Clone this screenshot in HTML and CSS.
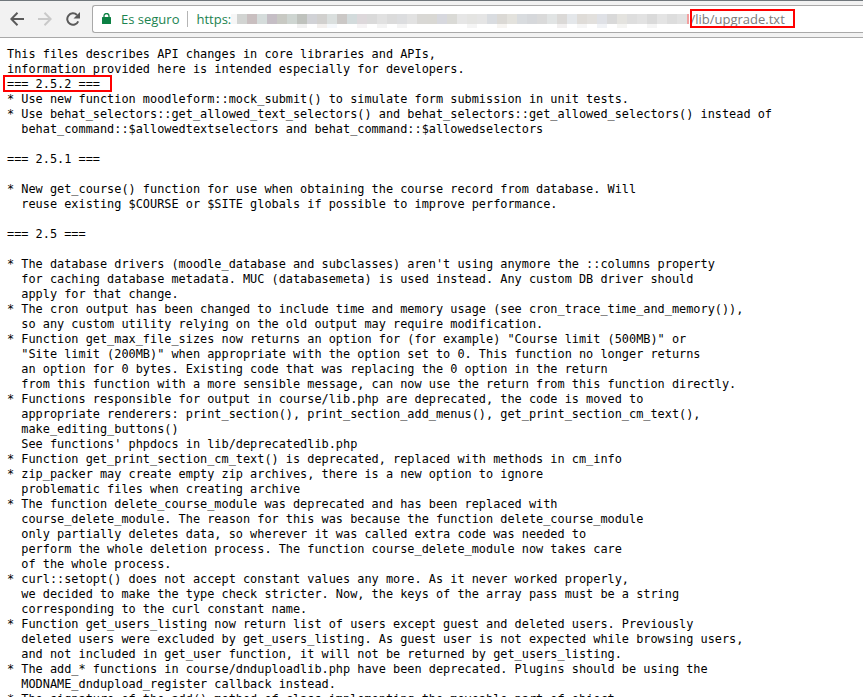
FILE: index.html
```html
<!DOCTYPE html>
<html lang="es">
<head>
<meta charset="utf-8">
<title>upgrade.txt</title>
<link rel="stylesheet" href="styles.css">
</head>
<body>
<header class="toolbar">
  <svg class="nav-icon" width="14" height="14" viewBox="0 0 14 14"><path d="M14 7H1.500M7.500 .7 1.300 7l6.200 6.300" fill="none" stroke="#5a5a5a" stroke-width="2"/></svg>
  <svg class="nav-icon" width="14" height="14" viewBox="0 0 14 14"><path d="M0 7H12.500M6.500 .7 12.700 7 6.500 13.300" fill="none" stroke="#c9c9c9" stroke-width="2"/></svg>
  <svg class="nav-icon" width="14" height="14" viewBox="0 0 14 14"><path d="M12.200 9.300A5.700 5.700 0 1 1 11 3" fill="none" stroke="#5a5a5a" stroke-width="2"/><path d="M14 0v6.500H7.500z" fill="#5a5a5a"/></svg>
  <div class="omnibox">
    <svg class="lock" width="9" height="11" viewBox="0 0 9 11"><path d="M2 5V3a2.500 2.500 0 0 1 5 0V5" fill="none" stroke="#0b8043" stroke-width="1.300"/><rect y="4" width="9" height="7" rx=".5" fill="#0b8043"/></svg>
    <span class="secure">Es seguro</span>
    <span class="divider"></span>
    <span class="scheme">https:</span>
    <svg class="blur" width="458" height="14" viewBox="0 0 458 14" aria-hidden="true">
      <g shape-rendering="crispEdges">
        <rect x="0" width="6" height="10" fill="#f6f6f6"/>
        <rect x="6" width="10" height="10" fill="#d2d4d2"/><rect x="16" width="10" height="10" fill="#c9bfc0"/><rect x="26" width="10" height="10" fill="#d5dcdb"/><rect x="36" width="10" height="10" fill="#c5bec5"/><rect x="46" width="10" height="10" fill="#c8c9c3"/><rect x="56" width="10" height="10" fill="#ced5d1"/><rect x="66" width="10" height="10" fill="#bfc2bd"/><rect x="76" width="10" height="10" fill="#d1d2d6"/><rect x="86" width="10" height="10" fill="#d1d0ce"/><rect x="96" width="10" height="10" fill="#dadfde"/><rect x="106" width="10" height="10" fill="#cbc8c6"/><rect x="116" width="10" height="10" fill="#d3dbdc"/><rect x="126" width="10" height="10" fill="#ddd8db"/><rect x="136" width="10" height="10" fill="#dadada"/><rect x="146" width="10" height="10" fill="#e1e1e1"/><rect x="156" width="10" height="10" fill="#dbdbdb"/><rect x="166" width="10" height="10" fill="#dcdddf"/><rect x="176" width="10" height="10" fill="#e2e2e2"/><rect x="186" width="10" height="10" fill="#d9d8d5"/><rect x="196" width="10" height="10" fill="#d9d8d4"/><rect x="206" width="10" height="10" fill="#d7d8de"/><rect x="216" width="10" height="10" fill="#dadad6"/><rect x="226" width="10" height="10" fill="#e6e6e6"/><rect x="236" width="10" height="10" fill="#e4e4e2"/><rect x="246" width="10" height="10" fill="#e5e5e5"/><rect x="256" width="10" height="10" fill="#d9dce0"/><rect x="266" width="10" height="10" fill="#dbd9d5"/><rect x="276" width="10" height="10" fill="#e3e2dd"/><rect x="286" width="10" height="10" fill="#d9dcdf"/><rect x="296" width="10" height="10" fill="#d6d8db"/><rect x="306" width="10" height="10" fill="#dadada"/><rect x="316" width="10" height="10" fill="#e1e4e4"/><rect x="326" width="10" height="10" fill="#dbd9d7"/><rect x="336" width="10" height="10" fill="#e4e7ea"/><rect x="346" width="10" height="10" fill="#dfdcd8"/><rect x="356" width="10" height="10" fill="#e2e0dd"/><rect x="366" width="10" height="10" fill="#dfe1e6"/><rect x="376" width="10" height="10" fill="#d9d9d9"/><rect x="386" width="10" height="10" fill="#e4e3df"/><rect x="396" width="10" height="10" fill="#dedede"/><rect x="406" width="10" height="10" fill="#e2e2e2"/><rect x="416" width="10" height="10" fill="#dadada"/><rect x="426" width="10" height="10" fill="#e4e4e4"/><rect x="436" width="10" height="10" fill="#dddddd"/><rect x="446" width="10" height="10" fill="#e2e2e2"/>
        <rect x="456" width="2" height="10" fill="#f2a0a0"/>
        <rect x="66" y="10" width="10" height="4" fill="#f1f1f1"/><rect x="86" y="10" width="10" height="4" fill="#f3f0ee"/><rect x="96" y="10" width="10" height="4" fill="#f5f8fb"/><rect x="126" y="10" width="10" height="4" fill="#f6f4f5"/><rect x="146" y="10" width="10" height="4" fill="#f4f4f4"/><rect x="166" y="10" width="10" height="4" fill="#f4f4f4"/><rect x="236" y="10" width="10" height="4" fill="#f5f5f5"/><rect x="266" y="10" width="10" height="4" fill="#f7f5f2"/><rect x="326" y="10" width="10" height="4" fill="#f2f0f0"/><rect x="346" y="10" width="10" height="4" fill="#f6f6f6"/><rect x="366" y="10" width="10" height="4" fill="#f1f3f6"/><rect x="386" y="10" width="10" height="4" fill="#f5f5f3"/><rect x="416" y="10" width="10" height="4" fill="#f5f5f5"/>
      </g>
    </svg>
    <span class="url-end">/lib/upgrade.txt</span>
    <span class="mark-url"></span>
  </div>
</header>
<main class="doc">
<span class="mark-version"></span><pre class="text">This files describes API changes in core libraries and APIs,
information provided here is intended especially for developers.
=== 2.5.2 ===
* Use new function moodleform::mock_submit() to simulate form submission in unit tests.
* Use behat_selectors::get_allowed_text_selectors() and behat_selectors::get_allowed_selectors() instead of
  behat_command::$allowedtextselectors and behat_command::$allowedselectors

=== 2.5.1 ===

* New get_course() function for use when obtaining the course record from database. Will
  reuse existing $COURSE or $SITE globals if possible to improve performance.

=== 2.5 ===

* The database drivers (moodle_database and subclasses) aren't using anymore the ::columns property
  for caching database metadata. MUC (databasemeta) is used instead. Any custom DB driver should
  apply for that change.
* The cron output has been changed to include time and memory usage (see cron_trace_time_and_memory()),
  so any custom utility relying on the old output may require modification.
* Function get_max_file_sizes now returns an option for (for example) "Course limit (500MB)" or
  "Site limit (200MB)" when appropriate with the option set to 0. This function no longer returns
  an option for 0 bytes. Existing code that was replacing the 0 option in the return
  from this function with a more sensible message, can now use the return from this function directly.
* Functions responsible for output in course/lib.php are deprecated, the code is moved to
  appropriate renderers: print_section(), print_section_add_menus(), get_print_section_cm_text(),
  make_editing_buttons()
  See functions' phpdocs in lib/deprecatedlib.php
* Function get_print_section_cm_text() is deprecated, replaced with methods in cm_info
* zip_packer may create empty zip archives, there is a new option to ignore
  problematic files when creating archive
* The function delete_course_module was deprecated and has been replaced with
  course_delete_module. The reason for this was because the function delete_course_module
  only partially deletes data, so wherever it was called extra code was needed to
  perform the whole deletion process. The function course_delete_module now takes care
  of the whole process.
* curl::setopt() does not accept constant values any more. As it never worked properly,
  we decided to make the type check stricter. Now, the keys of the array pass must be a string
  corresponding to the curl constant name.
* Function get_users_listing now return list of users except guest and deleted users. Previously
  deleted users were excluded by get_users_listing. As guest user is not expected while browsing users,
  and not included in get_user function, it will not be returned by get_users_listing.
* The add_* functions in course/dnduploadlib.php have been deprecated. Plugins should be using the
  MODNAME_dndupload_register callback instead.
* The signature of the add() method of class implementing the moveable part of object</pre>
</main>
</body>
</html>
```

FILE: styles.css
```css
html, body {
  margin: 0;
  height: 100%;
  overflow: hidden;
  background: #fff;
}
.toolbar {
  box-sizing: border-box;
  height: 38px;
  display: flex;
  align-items: center;
  padding: 0 0 1px 10px;
  gap: 14px;
  background: #f2f2f2;
  border-top: 1px solid #70777c;
  border-bottom: 1px solid #a9a9a9;
  font-family: "Open Sans", sans-serif;
}
.omnibox {
  flex: 1;
  margin-left: -2px;
  height: 28px;
  box-sizing: border-box;
  background: #fff;
  border: 1px solid #a9a9a9;
  border-right: 0;
  border-radius: 3px 0 0 3px;
  display: flex;
  align-items: center;
  padding-left: 9px;
  font-size: 13px;
  position: relative;
}
.lock { flex: none; }
.secure { color: #1c8350; margin-left: 10px; }
.divider { width: 1px; height: 16px; background: #b5b5b5; margin: 0 8px; }
.scheme { color: #1c8350; width: 35px; flex: none; }
.blur {
  flex: none;
  align-self: flex-start;
  margin-top: 8px;
}
.url-end {
  color: #7b7b7b;
  margin-left: 1px;
}
.mark-url {
  position: absolute;
  left: 597px;
  top: 3px;
  width: 101px;
  height: 15px;
  border: 2px solid #f00;
}
.doc {
  position: relative;
  padding: 9px 7px 0;
}
.text {
  margin: 0;
  font: 11.88px/15px "DejaVu Sans Mono", monospace;
  color: #000;
  white-space: pre;
}
.mark-version {
  position: absolute;
  left: 3px;
  top: 37px;
  width: 105px;
  height: 13px;
  border: 2px solid #f00;
}
```
